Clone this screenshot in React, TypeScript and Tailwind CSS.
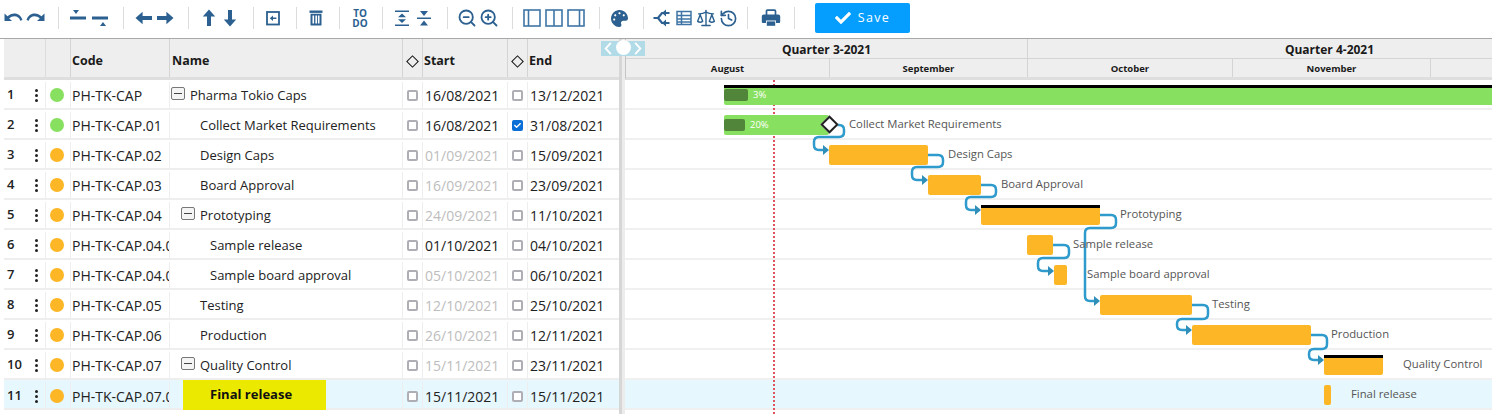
import { History, Scale, ZoomIn, ZoomOut } from "lucide-react";
import { FaCheck, FaPalette } from "react-icons/fa";
import type { ReactNode } from "react";

const BLUE = "#2b6090";

type Row = {
  id: number;
  status: "green" | "orange";
  code: string;
  name: string;
  indent: string;
  collapsible?: boolean;
  start: string;
  startAuto?: boolean;
  end: string;
  endChecked?: boolean;
  selected?: boolean;
  highlight?: boolean;
};

const rows: Row[] = [
  { id: 1, status: "green", code: "PH-TK-CAP", name: "Pharma Tokio Caps", indent: "pl-[1px]", collapsible: true, start: "16/08/2021", end: "13/12/2021" },
  { id: 2, status: "green", code: "PH-TK-CAP.01", name: "Collect Market Requirements", indent: "pl-[30px]", start: "16/08/2021", end: "31/08/2021", endChecked: true },
  { id: 3, status: "orange", code: "PH-TK-CAP.02", name: "Design Caps", indent: "pl-[30px]", start: "01/09/2021", startAuto: true, end: "15/09/2021" },
  { id: 4, status: "orange", code: "PH-TK-CAP.03", name: "Board Approval", indent: "pl-[30px]", start: "16/09/2021", startAuto: true, end: "23/09/2021" },
  { id: 5, status: "orange", code: "PH-TK-CAP.04", name: "Prototyping", indent: "pl-[11px]", collapsible: true, start: "24/09/2021", startAuto: true, end: "11/10/2021" },
  { id: 6, status: "orange", code: "PH-TK-CAP.04.01", name: "Sample release", indent: "pl-[40px]", start: "01/10/2021", end: "04/10/2021" },
  { id: 7, status: "orange", code: "PH-TK-CAP.04.02", name: "Sample board approval", indent: "pl-[40px]", start: "05/10/2021", startAuto: true, end: "06/10/2021" },
  { id: 8, status: "orange", code: "PH-TK-CAP.05", name: "Testing", indent: "pl-[30px]", start: "12/10/2021", startAuto: true, end: "25/10/2021" },
  { id: 9, status: "orange", code: "PH-TK-CAP.06", name: "Production", indent: "pl-[30px]", start: "26/10/2021", startAuto: true, end: "12/11/2021" },
  { id: 10, status: "orange", code: "PH-TK-CAP.07", name: "Quality Control", indent: "pl-[11px]", collapsible: true, start: "15/11/2021", startAuto: true, end: "23/11/2021" },
  { id: 11, status: "orange", code: "PH-TK-CAP.07.01", name: "Final release", indent: "pl-[13px]", start: "15/11/2021", end: "15/11/2021", selected: true, highlight: true },
];

type Bar = {
  pos: string;
  color: string;
  summary?: boolean;
  progress?: string;
  percent?: string;
  label: string;
  labelPos: string;
};

const bars: Bar[] = [
  { pos: "left-[99px] w-[800px]", color: "bg-[#88e060]", summary: true, progress: "w-[24px]", percent: "3%", label: "", labelPos: "" },
  { pos: "left-[99px] w-[105px]", color: "bg-[#88e060]", progress: "w-[21px]", percent: "20%", label: "Collect Market Requirements", labelPos: "left-[224px]" },
  { pos: "left-[204px] w-[99px]", color: "bg-[#fdb726]", label: "Design Caps", labelPos: "left-[323px]" },
  { pos: "left-[303px] w-[53px]", color: "bg-[#fdb726]", label: "Board Approval", labelPos: "left-[376px]" },
  { pos: "left-[356px] w-[119px]", color: "bg-[#fdb726]", summary: true, label: "Prototyping", labelPos: "left-[495px]" },
  { pos: "left-[402px] w-[26px]", color: "bg-[#fdb726]", label: "Sample release", labelPos: "left-[448px]" },
  { pos: "left-[429px] w-[13px]", color: "bg-[#fdb726]", label: "Sample board approval", labelPos: "left-[462px]" },
  { pos: "left-[475px] w-[92px]", color: "bg-[#fdb726]", label: "Testing", labelPos: "left-[587px]" },
  { pos: "left-[567px] w-[119px]", color: "bg-[#fdb726]", label: "Production", labelPos: "left-[706px]" },
  { pos: "left-[699px] w-[59px]", color: "bg-[#fdb726]", summary: true, label: "Quality Control", labelPos: "left-[778px]" },
  { pos: "left-[699px] w-[7px]", color: "bg-[#fdb726]", label: "Final release", labelPos: "left-[726px]" },
];

// x1,y1 leaves the bar, xr/xl are the turning columns, ends at x2,y2 with an arrow head
function linkPath(x1: number, y1: number, xr: number, ymid: number, xl: number, y2: number, x2: number) {
  const r = 5;
  return [
    `M${x1} ${y1}`,
    `H${xr - r}`,
    `Q${xr} ${y1} ${xr} ${y1 + r}`,
    `V${ymid - r}`,
    `Q${xr} ${ymid} ${xr - r} ${ymid}`,
    `H${xl + r}`,
    `Q${xl} ${ymid} ${xl} ${ymid + r}`,
    `V${y2 - r}`,
    `Q${xl} ${y2} ${xl + r} ${y2}`,
    `H${x2 - 4}`,
  ].join(" ");
}

const links: [number, number, number, number, number, number, number][] = [
  [210, 45, 219, 57, 189, 70, 204],
  [303, 75, 318, 87, 287, 100, 303],
  [356, 105, 371, 117, 341, 130, 356],
  [475, 135, 491, 148, 460, 221, 475],
  [428, 165, 444, 178, 413, 191, 429],
  [567, 225, 583, 239, 552, 250, 567],
  [686, 255, 702, 269, 684, 280, 699],
];

function Glyph({ children, flip }: { children: ReactNode; flip?: boolean }) {
  return (
    <svg viewBox="0 0 20 20" className={flip ? "h-5 w-5 -scale-x-100" : "h-5 w-5"} fill={BLUE}>
      {children}
    </svg>
  );
}

function Box({ children }: { children: ReactNode }) {
  return <div className="flex h-5 w-5 items-center justify-center text-[#2b6090]">{children}</div>;
}

function UndoIcon({ flip }: { flip?: boolean }) {
  return (
    <Glyph flip={flip}>
      <path d="M1.5 5.5v7.5h7.5L6.2 10.4C7.7 8.9 9.4 8.2 11.4 8.2c2.9 0 5 1.6 5.9 4.6l2.2-.8C18.3 7.9 15.3 5.4 11.4 5.4c-2.8 0-5 1-6.9 2.9z" />
    </Glyph>
  );
}

function ArrowIcon({ dir }: { dir: "left" | "right" | "up" | "down" }) {
  const rotate = { left: 0, right: 180, up: 90, down: 270 }[dir];
  return (
    <Glyph>
      <path transform={`rotate(${rotate} 10 10)`} d="M1.5 10 8.6 3.8v4.2h9.4v4H8.6v4.2z" />
    </Glyph>
  );
}

function ToolGroup({ className, children }: { className: string; children: ReactNode }) {
  return (
    <div className={`flex h-[22px] items-center border-r border-[#dcdcdc] ${className}`}>{children}</div>
  );
}

function Toolbar() {
  return (
    <div className="flex h-[38px] items-center pb-[2px]">
      <ToolGroup className="w-[59px] gap-[3px] pl-[3px]">
        <Box><UndoIcon /></Box>
        <Box><UndoIcon flip /></Box>
      </ToolGroup>
      <ToolGroup className="w-[65px] gap-[2px] pl-[9px]">
        <Box>
          <Glyph>
            <rect x="2" y="8.5" width="16" height="3" />
            <path d="M5 2h6L8 6z" />
          </Glyph>
        </Box>
        <Box>
          <Glyph>
            <rect x="2" y="8.5" width="16" height="3" />
            <path d="M10 18h6l-3-4z" />
          </Glyph>
        </Box>
      </ToolGroup>
      <ToolGroup className="w-[65px] gap-[1px] pl-[10px]">
        <Box><ArrowIcon dir="left" /></Box>
        <Box><ArrowIcon dir="right" /></Box>
      </ToolGroup>
      <ToolGroup className="w-[65px] gap-[1px] pl-[10px]">
        <Box><ArrowIcon dir="up" /></Box>
        <Box><ArrowIcon dir="down" /></Box>
      </ToolGroup>
      <ToolGroup className="w-[43px] pl-[9px]">
        <Box>
          <Glyph>
            <rect x="4" y="4" width="12" height="12.5" fill="none" stroke={BLUE} strokeWidth="1.8" />
            <path d="M6.8 10.2 10 7.4v2h3.4v1.6H10v2z" />
          </Glyph>
        </Box>
      </ToolGroup>
      <ToolGroup className="w-[43px] pl-[9px]">
        <Box>
          <Glyph>
            <path d="M3.5 2.5h13v2.4h-13z" />
            <path d="M4.5 5.8h11v11.7h-11zm2 1.8v7.8h1.6V7.6zm2.9 0v7.8H11V7.6zm2.5 0v7.8h1.6V7.6z" fillRule="evenodd" />
          </Glyph>
        </Box>
      </ToolGroup>
      <ToolGroup className="w-[43px] pl-[10px]">
        <div className="flex h-5 w-5 items-center justify-center">
          <span className="block w-[16px] text-center text-[10px] leading-[10px] font-bold text-[#2b6090]">TO DO</span>
        </div>
      </ToolGroup>
      <ToolGroup className="w-[65px] gap-[2px] pl-[9px]">
        <Box>
          <Glyph>
            <path d="M3 2.5h14v1.5H3zM3 16.5h14V18H3zM6 9.2h8L10 5.4zM6 11.3h8l-4 3.8z" />
          </Glyph>
        </Box>
        <Box>
          <Glyph>
            <path d="M3 9.5h14V11H3zM6 3h8l-4 5zM6 17.5h8l-4-5z" />
          </Glyph>
        </Box>
      </ToolGroup>
      <ToolGroup className="w-[65px] gap-[2px] pl-[9px]">
        <Box><ZoomOut size={20} strokeWidth={2.2} /></Box>
        <Box><ZoomIn size={20} strokeWidth={2.2} /></Box>
      </ToolGroup>
      <ToolGroup className="w-[87px] gap-[2px] pl-[9px]">
        {[6.5, 10, 13.5].map((x) => (
          <Box key={x}>
            <svg viewBox="0 0 20 20" className="h-5 w-5" fill="none" stroke="#3f75a6" strokeWidth="1.6">
              <rect x="2" y="2" width="16" height="16" />
              <path d={`M${x} 2v16`} />
            </svg>
          </Box>
        ))}
      </ToolGroup>
      <ToolGroup className="w-[44px] pl-[9px]">
        <Box><FaPalette size={17} /></Box>
      </ToolGroup>
      <ToolGroup className="w-[104px] gap-[2px] pl-[8px]">
        <Box>
          <svg viewBox="0 0 20 20" className="h-5 w-5" fill="none" stroke={BLUE} strokeWidth="2.2">
            <path d="M1.5 10H6l4-5h7.5M6 10l4 5h7.5" />
            <path d="M14 1.5v7l-4-3.5zM14 11.5v7l-4-3.5z" fill={BLUE} stroke="none" />
          </svg>
        </Box>
        <Box>
          <svg viewBox="0 0 20 20" className="h-5 w-5" fill="none" stroke="#3f75a6" strokeWidth="1.5">
            <rect x="3" y="3.5" width="14" height="13" />
            <path d="M3 7.5h14M3 11h14M3 14h14M7.5 3.5v13" />
          </svg>
        </Box>
        <Box><Scale size={20} strokeWidth={1.7} /></Box>
        <Box><History size={19} strokeWidth={2.1} /></Box>
      </ToolGroup>
      <ToolGroup className="w-[47px] pl-[13px]">
        <Box>
          <Glyph>
            <path d="M5.5 7V3.2c0-.6.4-1 1-1h7c.6 0 1 .4 1 1V7" fill="none" stroke={BLUE} strokeWidth="1.7" />
            <path d="M2.8 6.5h14.4c1.2 0 2 .8 2 2v5.2c0 .8-.6 1.3-1.3 1.3H15v-2.5H5V15H2.1c-.7 0-1.3-.5-1.3-1.3V8.5c0-1.2.8-2 2-2z" />
            <path d="M5.8 13.4h8.4v4.4H5.8z" />
          </Glyph>
        </Box>
      </ToolGroup>
      <button className="ml-[20px] flex h-[30px] w-[95px] items-center justify-center gap-[7px] rounded-[2px] bg-[#059eff] text-[12.5px] tracking-[1.3px] text-white">
        <FaCheck size={16} />
        Save
      </button>
    </div>
  );
}

function Dots() {
  return (
    <div className="flex flex-col items-center gap-[2px]">
      <span className="h-[3px] w-[3px] rounded-full bg-[#222]" />
      <span className="h-[3px] w-[3px] rounded-full bg-[#222]" />
      <span className="h-[3px] w-[3px] rounded-full bg-[#222]" />
    </div>
  );
}

function Checkbox({ checked }: { checked?: boolean }) {
  if (checked) {
    return (
      <div className="flex h-[11px] w-[11px] items-center justify-center rounded-[2px] bg-[#0a6fd6] text-white">
        <FaCheck size={7} />
      </div>
    );
  }
  return <div className="h-[11px] w-[11px] rounded-[2px] border-2 border-[#aeaeb4] bg-white" />;
}

function Diamond() {
  return <div className="h-[9px] w-[9px] rotate-45 border-[1.5px] border-[#111]" />;
}

const gridCols = "grid grid-cols-[23px_18px_25px_99px_233px_20px_85px_20px_92px]";

function TaskTable() {
  return (
    <div className="ml-[4px] w-[615px] shrink-0">
      <div className={`${gridCols} h-[41px] border-b-[3px] border-[#dedede] bg-[#eeeeee] text-[12.5px] font-bold text-[#1a1a1a] [&>div]:pt-[7px]`}>
        <div />
        <div />
        <div className="border-l border-[#dcdcdc]" />
        <div className="flex items-center border-l border-[#d4d4d4] pl-[1px]">Code</div>
        <div className="flex items-center border-l border-[#d4d4d4] pl-[2px]">Name</div>
        <div className="flex items-center justify-center border-l border-[#d4d4d4]"><Diamond /></div>
        <div className="flex items-center border-l border-[#d4d4d4] pl-[1px]">Start</div>
        <div className="flex items-center justify-center border-l border-[#d4d4d4]"><Diamond /></div>
        <div className="flex items-center border-l border-[#d4d4d4] pl-[1px]">End</div>
      </div>
      {rows.map((row) => (
        <div
          key={row.id}
          className={`${gridCols} h-[30px] border-b-2 border-[#eeeeee] pt-[2px] text-[13px] text-[#222] ${row.selected ? "bg-[#e6f7fd]" : ""}`}
        >
          <div className="flex items-center pl-[3px] font-semibold">{row.id}</div>
          <div className="flex items-center justify-center"><Dots /></div>
          <div className="flex items-center justify-center border-l border-[#eeeeee] pr-[2px]">
            <span className={`h-[14px] w-[14px] rounded-full ${row.status === "green" ? "bg-[#88e060]" : "bg-[#fdb726]"}`} />
          </div>
          <div className="flex items-center overflow-hidden border-l border-[#eeeeee] pl-[1px] text-[14px] whitespace-nowrap">{row.code}</div>
          <div className={`flex items-center border-l border-[#eeeeee] ${row.indent}`}>
            {row.collapsible && (
              <span className="mr-[5px] -mt-[3px] flex h-[13px] w-[14px] items-center justify-center rounded-[2px] border border-[#777] bg-[#f4f4f4]">
                <span className="h-[1px] w-[8px] bg-[#444]" />
              </span>
            )}
            {row.highlight ? (
              <span className="-mt-[2px] flex h-[30px] w-[143px] items-center bg-[#ece900] pl-[27px] font-bold text-[#111]">{row.name}</span>
            ) : (
              <span className="mt-[1px]">{row.name}</span>
            )}
          </div>
          <div className="flex items-center justify-center border-l border-[#eeeeee]"><Checkbox /></div>
          <div className={`flex items-center border-l border-[#eeeeee] pl-[2px] text-[14px] ${row.startAuto ? "text-[#bdbdbd]" : ""}`}>{row.start}</div>
          <div className="flex items-center justify-center border-l border-[#eeeeee]"><Checkbox checked={row.endChecked} /></div>
          <div className="flex items-center border-l border-[#eeeeee] pl-[2px] text-[14px]">{row.end}</div>
        </div>
      ))}
    </div>
  );
}

function Splitter() {
  return (
    <div className="relative w-[6px] shrink-0 border-l-[3px] border-[#d6d6d6] bg-[#ececec]">
      <div className="absolute top-[2px] left-[-21px] flex h-[15px] w-[44px] items-center justify-between bg-[#b2dbe8] px-[3px] text-white">
        <svg viewBox="0 0 8 14" className="h-[13px] w-[8px]" fill="none" stroke="currentColor" strokeWidth="2"><path d="M7 1 1.5 7 7 13" /></svg>
        <svg viewBox="0 0 8 14" className="h-[13px] w-[8px]" fill="none" stroke="currentColor" strokeWidth="2"><path d="M1 1l5.5 6L1 13" /></svg>
      </div>
      <div className="absolute top-[1px] left-[-6px] h-[15px] w-[15px] rounded-full bg-white" />
    </div>
  );
}

function TimelineHeader() {
  const months = [
    ["August", "w-[204px]"],
    ["September", "w-[198px]"],
    ["October", "w-[205px]"],
    ["November", "w-[198px]"],
    ["", "w-[205px]"],
  ];
  return (
    <div className="h-[41px] overflow-hidden border-b-[3px] border-l border-[#dedede] border-l-[#c4c4c4] bg-[#eeeeee] text-[#1a1a1a]">
      <div className="flex h-[20px] w-[1100px] border-b border-[#d4d4d4] text-[12px] font-bold">
        <div className="flex w-[401px] items-center justify-center pt-[3px]">Quarter 3-2021</div>
        <div className="flex w-[604px] items-center justify-center border-l border-[#d4d4d4] pt-[3px]">Quarter 4-2021</div>
      </div>
      <div className="flex h-[18px] w-[1100px] text-[9.5px] font-bold">
        {months.map(([name, width]) => (
          <div key={name} className={`flex items-center justify-center border-r border-[#d4d4d4] pt-[2px] ${width}`}>{name}</div>
        ))}
      </div>
    </div>
  );
}

function Chart() {
  return (
    <div className="relative flex-1 overflow-hidden">
      {rows.map((row) => (
        <div key={row.id} className={`h-[30px] border-b-2 border-[#f0f0f0] ${row.selected ? "bg-[#e6f7fd]" : ""}`} />
      ))}
      <div className="absolute top-0 bottom-0 left-[148px] border-l-2 border-dotted border-[#e0525f]" />
      <svg className="absolute top-0 left-0" width="867" height="334" fill="none">
        {links.map((l) => (
          <g key={l.join()}>
            <path d={linkPath(...l)} stroke="#2f9bcc" strokeWidth="2.5" />
            <path d={`M${l[6] - 6} ${l[5] - 5}L${l[6]} ${l[5]}L${l[6] - 6} ${l[5] + 5}Z`} fill="#2f8fb8" />
          </g>
        ))}
      </svg>
      {bars.map((bar, i) => (
        <div key={i} className="absolute left-0 h-[30px] w-full" style={{ top: i * 30 }}>
          <div className={`absolute top-[5px] h-[20px] rounded-[2px] ${bar.pos} ${bar.color}`}>
            {bar.summary && <div className="absolute top-0 right-0 left-0 h-[3px] bg-black" />}
            {bar.progress && (
              <div className="absolute top-[4px] left-0 flex h-[12px] w-full items-center">
                <div className={`h-[12px] rounded-[2px] bg-[#50853a] ${bar.progress}`} />
                <span className="ml-[5px] text-[9.5px] text-white">{bar.percent}</span>
              </div>
            )}
          </div>
          {bar.label && (
            <span className={`absolute top-[4px] text-[11.3px] leading-[20px] whitespace-nowrap text-[#555] ${bar.labelPos}`}>{bar.label}</span>
          )}
        </div>
      ))}
      <div className="absolute top-[38px] left-[198px] h-[13px] w-[13px] rotate-45 border-2 border-[#222] bg-white" />
    </div>
  );
}

export default function App() {
  return (
    <div className="h-[414px] w-[1492px] overflow-hidden bg-white font-['Open_Sans',sans-serif]">
      <Toolbar />
      <div className="flex h-[376px] border-t border-[#a8a8a8]">
        <TaskTable />
        <Splitter />
        <div className="flex min-w-0 flex-1 flex-col">
          <TimelineHeader />
          <Chart />
        </div>
      </div>
    </div>
  );
}
